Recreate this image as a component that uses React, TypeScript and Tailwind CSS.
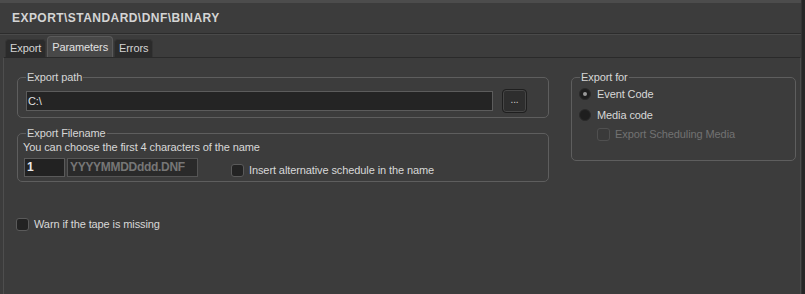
import React from 'react';

const font = { fontFamily: '"Liberation Sans", Arial, sans-serif' };

function Tab({ label, active }: { label: string; active?: boolean }) {
  if (active) {
    return (
      <div className="h-[21px] px-[4px] flex items-center rounded-t-[4px] bg-[#484848] border-t border-x border-[#5a5a5a] text-[#e2e2e2]">
        {label}
      </div>
    );
  }
  return (
    <div className="h-[18px] px-[4px] flex items-center rounded-t-[4px] bg-[#2b2b2b] border-t border-x border-[#353535] text-[#d4d4d4]">
      {label}
    </div>
  );
}

function Group({
  title,
  className,
  children,
}: {
  title: string;
  className?: string;
  children: React.ReactNode;
}) {
  return (
    <fieldset className={`border border-[#5e5e5e] rounded-[5px] ${className ?? ''}`}>
      <legend className="ml-[8px] px-[1px] leading-[14px] text-[#d6d6d6]">{title}</legend>
      {children}
    </fieldset>
  );
}

function Check({ disabled }: { disabled?: boolean }) {
  return (
    <span
      className={`w-[13px] h-[13px] rounded-[3px] shrink-0 border ${
        disabled ? 'bg-[#3a3a3a] border-[#505050]' : 'bg-[#232323] border-[#5a5a5a]'
      }`}
    />
  );
}

function Radio({ checked }: { checked?: boolean }) {
  return (
    <span className="w-[12px] h-[12px] rounded-full bg-[#1e1e1e] border border-[#2a2a2a] shrink-0 flex items-center justify-center">
      {checked && <span className="w-[4px] h-[4px] rounded-full bg-[#9a9a9a]" />}
    </span>
  );
}

export default function App() {
  return (
    <div
      className="w-[805px] h-[294px] bg-[#3c3c3c] flex text-[11px] tracking-[-0.1px] overflow-hidden"
      style={font}
    >
      <div className="flex-1 flex flex-col">
        <div className="h-[3px] bg-[#4c4c4c]" />
        <div className="h-[31px] flex items-center pl-[12px] border-b border-[#2c2c2c]">
          <span className="font-bold text-[12px] text-[#d4d4d4] tracking-[0.45px]">
            EXPORT\STANDARD\DNF\BINARY
          </span>
        </div>
        <div className="h-[23px] border-t border-[#4a4a4a] flex items-end pl-[5px] gap-[1px]">
          <Tab label="Export" />
          <Tab label="Parameters" active />
          <Tab label="Errors" />
        </div>
        <div className="flex-1 ml-[3px] border-l border-t border-r border-t-[#2a2a2a] border-l-[#4e4e4e] border-r-[#4a4a4a] pl-[13px] pt-[12px] text-[#d8d8d8]">
          <div className="flex gap-[22px]">
            <div className="w-[532px] flex flex-col gap-[8px]">
              <Group title="Export path" className="h-[48px]">
                <div className="flex items-center gap-[9px] pl-[8px] pr-[21px] pt-[5px]">
                  <div className="flex-1 h-[20px] bg-[#242424] border border-[#5c5c5c] flex items-center pl-[1px] text-[#e0e0e0]">
                    C:\
                  </div>
                  <button className="w-[25px] h-[24px] rounded-[4px] bg-[#2e2e2e] border border-[#1f1f1f] shadow-[inset_0_0_0_1px_#474747] text-[#cfcfcf] text-[10px] leading-none pb-[2px]">
                    ...
                  </button>
                </div>
              </Group>
              <Group title="Export Filename" className="h-[56px]">
                <div className="pl-[5px]">
                  <div className="leading-[13px] mt-[1px]">You can choose the first 4 characters of the name</div>
                  <div className="flex items-center mt-[2px] pl-[1px]">
                    <div className="w-[41px] h-[19px] bg-[#222222] border border-[#5a5a5a] flex items-center pl-[2px] font-bold text-[12px] text-[#e8e8e8]">
                      1
                    </div>
                    <div className="ml-[2px] w-[131px] h-[19px] bg-[#2a2a2a] border border-[#555555] flex items-center pl-[2px] font-bold text-[12px] text-[#767676] tracking-[-0.3px]">
                      YYYYMMDDddd.DNF
                    </div>
                    <div className="ml-[33px] flex items-center gap-[5px] mt-[6px]">
                      <Check />
                      <span>Insert alternative schedule in the name</span>
                    </div>
                  </div>
                </div>
              </Group>
            </div>
            <Group title="Export for" className="w-[225px] h-[91px]">
              <div className="flex flex-col pl-[7px]">
                <div className="flex items-center gap-[6px] h-[20px]">
                  <Radio checked />
                  <span>Event Code</span>
                </div>
                <div className="flex items-center gap-[6px] h-[20px] mt-[1px]">
                  <Radio />
                  <span>Media code</span>
                </div>
                <div className="flex items-center gap-[5px] h-[18px] pl-[18px]">
                  <Check disabled />
                  <span className="text-[#727272]">Export Scheduling Media</span>
                </div>
              </div>
            </Group>
          </div>
          <div className="flex items-center gap-[5px] mt-[34px] ml-[-1px]">
            <Check />
            <span>Warn if the tape is missing</span>
          </div>
        </div>
      </div>
      <div className="w-[4px] bg-[#262626] border-l border-[#333333]" />
    </div>
  );
}
